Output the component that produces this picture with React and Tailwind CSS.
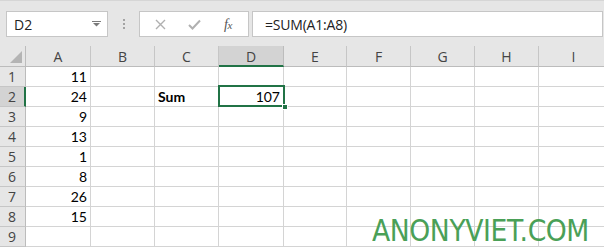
import React from "react";

const COLS = [
  { id: "A", w: 65 },
  { id: "B", w: 64 },
  { id: "C", w: 64 },
  { id: "D", w: 65 },
  { id: "E", w: 63 },
  { id: "F", w: 64 },
  { id: "G", w: 64 },
  { id: "H", w: 64 },
  { id: "I", w: 70 },
];

const colA = [11, 24, 9, 13, 1, 8, 26, 15, ""];

function cellContent(row, col) {
  if (col === "A") return { text: colA[row - 1], align: "right" };
  if (row === 2 && col === "C") return { text: "Sum", align: "left", bold: true };
  if (row === 2 && col === "D") return { text: "107", align: "right" };
  return { text: "" };
}

function FormulaBar() {
  return (
    <div className="h-[46px] bg-[#e6e6e6] border-t border-[#d6d6d6] flex items-start pt-[10px] pl-[6px]">
      {/* Name box */}
      <div className="w-[102px] h-[26px] bg-white border border-[#c6c6c6] flex items-center pl-[7px] pr-[6px]">
        <span className="flex-1 text-[14px] text-[#222] font-['Open_Sans',sans-serif]">D2</span>
        <svg width="9" height="6" viewBox="0 0 9 6">
          <rect x="0" y="0" width="9" height="1" fill="#7a7a7a" />
          <path d="M1 2 L8 2 L4.5 5.5 Z" fill="#7a7a7a" />
        </svg>
      </div>
      {/* grip dots */}
      <div className="w-[31px] h-[26px] flex flex-col items-center justify-center gap-[2px]">
        <span className="w-[2px] h-[2px] bg-[#a3a3a3]" />
        <span className="w-[2px] h-[2px] bg-[#a3a3a3]" />
        <span className="w-[2px] h-[2px] bg-[#a3a3a3]" />
      </div>
      {/* cancel / enter / fx */}
      <div className="w-[110px] h-[26px] bg-white border border-[#c6c6c6] flex items-center">
        <div className="w-[38px] flex justify-center pl-[2px]">
          <svg width="11" height="11" viewBox="0 0 11 11">
            <path d="M1 1 L10 10 M10 1 L1 10" stroke="#b0b0b0" strokeWidth="1.4" />
          </svg>
        </div>
        <div className="w-[32px] flex justify-center">
          <svg width="13" height="11" viewBox="0 0 13 11">
            <path d="M1 6 L4.5 9.5 L12 1.5" stroke="#b0b0b0" strokeWidth="2" fill="none" />
          </svg>
        </div>
        <div className="flex-1 flex justify-center pr-[2px]">
          <span className="text-[14px] italic text-[#555] font-['Liberation_Serif',serif] tracking-[-0.5px]">
            f<span className="text-[11px]">x</span>
          </span>
        </div>
      </div>
      {/* formula input */}
      <div className="ml-[3px] w-[351px] h-[26px] bg-white border border-[#c6c6c6] flex items-center pl-[12px]">
        <span className="text-[14px] text-[#222] font-['Open_Sans',sans-serif] tracking-[-0.2px]">=SUM(A1:A8)</span>
      </div>
    </div>
  );
}

function HeaderRow() {
  return (
    <div className="flex h-[21px] font-['Open_Sans',sans-serif] text-[14px] text-[#444]">
      <div className="w-[26px] shrink-0 bg-[#e6e6e6] border-b border-r border-[#bcbcbc] flex items-end justify-end p-[3px]">
        <svg width="12" height="12" viewBox="0 0 12 12">
          <path d="M12 0 L12 12 L0 12 Z" fill="#b4b4b4" />
        </svg>
      </div>
      {COLS.map((c) => {
        const sel = c.id === "D";
        return (
          <div
            key={c.id}
            style={{ width: c.w }}
            className={
              sel
                ? "shrink-0 bg-[#d3d3d3] border-r border-[#bcbcbc] border-b-2 border-b-[#217346] flex items-center justify-center pt-[2px]"
                : "shrink-0 bg-[#e6e6e6] border-r border-b border-[#c6c6c6] border-b-[#bcbcbc] flex items-center justify-center"
            }
          >
            {c.id}
          </div>
        );
      })}
    </div>
  );
}

function DataRow({ r }) {
  const sel = r === 2;
  return (
    <div className="flex h-[20px]">
      <div
        className={
          sel
            ? "w-[26px] shrink-0 bg-[#d3d3d3] border-b border-[#c6c6c6] border-r-2 border-r-[#217346] flex items-center pl-[8px] text-[14px] text-[#444] font-['Open_Sans',sans-serif]"
            : "w-[26px] shrink-0 bg-[#e6e6e6] border-b border-r border-[#c6c6c6] border-r-[#bcbcbc] flex items-center pl-[8px] text-[14px] text-[#444] font-['Open_Sans',sans-serif]"
        }
      >
        {r}
      </div>
      {COLS.map((c) => {
        const cc = cellContent(r, c.id);
        return (
          <div
            key={c.id}
            style={{ width: c.w }}
            className={
              "shrink-0 bg-white border-r border-b border-[#d4d4d4] flex items-center px-[3px] text-[14px] text-black font-['Lato',sans-serif] " +
              (cc.align === "right" ? "justify-end" : "justify-start") +
              (cc.bold ? " font-bold" : "")
            }
          >
            {cc.text}
          </div>
        );
      })}
    </div>
  );
}

export default function App() {
  return (
    <div className="relative w-[604px] h-[247px] overflow-hidden bg-white">
      <FormulaBar />
      <HeaderRow />
      {[1, 2, 3, 4, 5, 6, 7, 8, 9].map((r) => (
        <DataRow key={r} r={r} />
      ))}
      {/* active cell outline */}
      <div className="absolute left-[218px] top-[85px] w-[67px] h-[22px] border-2 border-[#217346] pointer-events-none" />
      <div className="absolute left-[282px] top-[104px] w-[6px] h-[6px] bg-[#217346] border border-white" />
      {/* watermark */}
      <div className="absolute left-[372px] top-[215px] text-[31px] leading-none text-[#4aa057] font-['DejaVu_Sans',sans-serif] tracking-[-0.5px] [transform:scaleX(0.86)] origin-left">
        ANONYVIET.COM
      </div>
    </div>
  );
}
